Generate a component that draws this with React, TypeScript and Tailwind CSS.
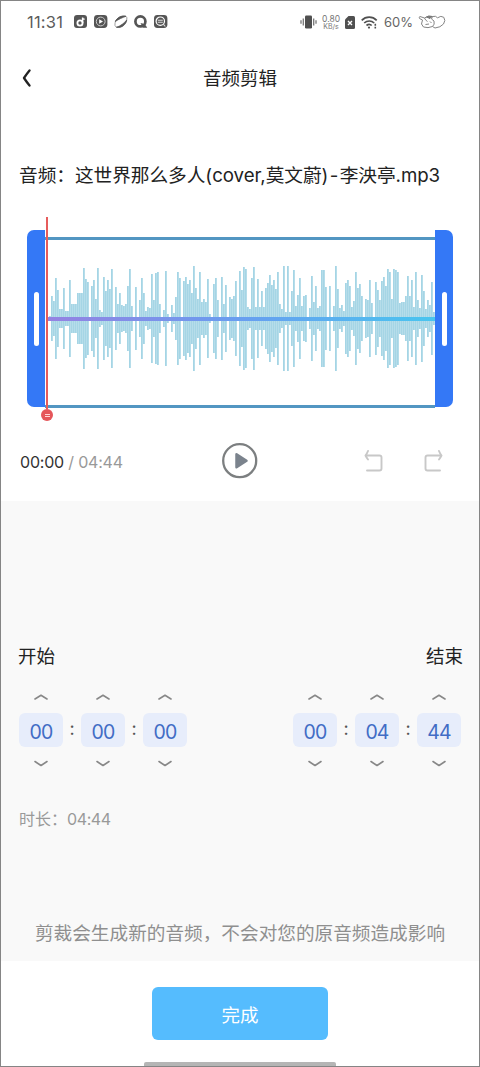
import { useState } from "react";

const AMPLITUDES = [
    2, 22, 17, 40, 28, 9, 9, 30, 7, 7, 38, 14, 14, 14, 25, 25, 25, 50, 39, 36, 0, 32, 38, 19, 50, 8, 6, 41, 27, 38,
    29, 49, 0, 31, 14, 25, 13, 12, 14, 32, 49, 12, 0, 31, 0, 18, 40, 25, 7, 11, 10, 44, 18, 45, 46, 14, 0, 8,
    47, 4, 0, 13, 5, 21, 46, 40, 0, 37, 41, 34, 38, 25, 52, 30, 19, 46, 16, 19, 16, 39, 4, 0, 34, 40, 18, 0, 41,
    14, 33, 0, 21, 19, 22, 37, 0, 47, 28, 51, 49, 11, 9, 40, 51, 11, 39, 11, 27, 11, 30, 35, 43, 33, 38, 29, 46,
    14, 9, 52, 6, 52, 6, 27, 48, 12, 23, 40, 12, 22, 23, 0, 10, 42, 16,
    32, 10, 12, 48, 48, 31, 0, 32, 0, 12, 52, 29, 10, 13, 7, 35, 38, 32, 11, 17, 46, 30, 34, 22, 0, 19, 18, 38,
    15, 0, 36, 28, 18, 37, 41, 32, 49, 46, 19, 49, 48, 46, 15, 16, 16, 22, 42, 22, 38, 11, 46, 18, 10, 43, 27, 9,
    18, 13, 36, 6,
];

const pad = (v: number) => String(v).padStart(2, "0");

function StatusBar() {
    return (
        <div className="h-[42px] pl-[26px] pr-[33px] flex items-center justify-between text-[#5c5c5c]">
            <div className="flex items-center">
                <span className="w-[47px] text-[16.5px] leading-5 tracking-[0.2px]">11:31</span>
                <svg width="94" height="14" viewBox="0 0 94 14" fill="none">
                    <rect width="13" height="13" rx="3" fill="#555" />
                    <circle cx="6" cy="8" r="2.6" stroke="#fff" strokeWidth="1.8" />
                    <path d="M8.6 8V2.5M8.6 3.6l2 .8" stroke="#fff" strokeWidth="1.5" />
                    <rect x="20" width="13.4" height="13" rx="3.4" fill="#555" />
                    <circle cx="26.7" cy="6.5" r="4.4" stroke="#ccc" strokeWidth="1" />
                    <path d="M25.2 4.2v4.6l3.8-2.3z" fill="#fff" />
                    <path d="M41 10.5C40.500 6 43.500 2.200 48 1.200 50.500.7 52.500 1 52.800 2.500 53.300 6.500 50.500 10.500 46.500 12 44 12.700 41.500 12.500 41 10.500z" stroke="#888" strokeWidth=".8" />
                    <path d="M41.300 6.500C43 2.500 47.500.4 52 1.300 48.500 2.500 44.500 4.300 41.300 6.500zM42.500 12.300C46.500 11 50.500 8 52.700 5 52 9.800 47.500 13.200 42.500 12.300z" fill="#555" stroke="#555" strokeWidth=".8" />
                    <circle cx="66.4" cy="6.4" r="5" stroke="#555" strokeWidth="2.7" />
                    <path d="M66.500 8.200c2.500-.3 4 .7 5.500 2.500l1.200 2.100h-4z" fill="#555" />
                    <rect x="80" width="13.4" height="13" rx="3.4" fill="#555" />
                    <circle cx="86.3" cy="6.2" r="4.2" stroke="#fff" strokeWidth="1.2" />
                    <path d="M83.800 5.200h5M83.800 7.200h5M89.300 9.200l2 2.300" stroke="#ddd" strokeWidth="1.1" />
                </svg>
            </div>
            <div className="flex items-center">
                <svg width="17" height="14" viewBox="0 0 17 14" fill="none" stroke="#777" strokeWidth="1.3">
                    <rect x="5" y=".5" width="7" height="13" rx="1.3" fill="#505050" stroke="none" />
                    <path d="M3.300 3.500v7M1 5.300v3.400M13.700 3.500v7M16 5.300v3.400" />
                </svg>
                <div className="w-[28px] flex flex-col items-center text-[7px] leading-[7px] text-[#777]">
                    <span className="text-[8.5px] leading-[8px]">0.80</span>
                    <span>KB/s</span>
                </div>
                <svg width="10" height="13" viewBox="0 0 10 13">
                    <path d="M3.500 0H8.500Q10 0 10 1.500V11.500Q10 13 8.500 13H1.500Q0 13 0 11.500V3.500z" fill="#505050" />
                    <path d="M3 5l4 4M7 5L3 9" stroke="#fff" strokeWidth="1.4" />
                </svg>
                <svg className="ml-[6px]" width="17" height="13" viewBox="0 0 17 13" fill="none" stroke="#505050" strokeWidth="1.7">
                    <path d="M.7 4.300c4.200-4.200 10.800-4.200 15 0M3.200 7c2.900-2.700 7.200-2.700 10 0M5.500 9.500c1.700-1.500 3.700-1.500 5.200 0" />
                    <circle cx="8" cy="11.6" r="1.1" fill="#505050" stroke="none" />
                    <path d="M14.300 7.800v2M14.300 10.800v1.600" strokeWidth="1.6" />
                </svg>
                <span className="ml-[6px] w-[34px] text-[13px] leading-5 text-[#666]">60%</span>
                <svg width="28" height="14" viewBox="0 0 28 14" fill="none" stroke="#858585" strokeWidth="1" strokeLinejoin="round">
                    {/* puppy hugging the battery heart */}
                    <path d="M4.500 5L1.500 3.500Q.5 2 2 1.500L6.500 3Q10 0 14.500 1.500L13.500 4L16 6Q17 9.500 14.500 11.500Q10 13.500 5.500 12Q2 9.500 4.500 5z" />
                    <path d="M14.500 1.500Q18 .5 19.500 2.800Q23 .2 25.800 2.300Q28 5.500 25.500 9Q22.500 12.500 17 13L14.500 11.500" />
                    <path d="M6.500 3Q7.500 5.500 9.500 6.500M7.500 9.500L11 9M12 6.500L13.500 8" />
                    <path d="M8.500 2L11 1.200L14 1.500L12 3.500z" fill="#777" stroke="#777" />
                </svg>
            </div>
        </div>
    );
}

function Handle({ side }: { side: "left" | "right" }) {
    return (
        <div className={`w-[18px] h-[177px] shrink-0 flex items-center justify-center bg-[#3478f6] ${side === "left" ? "rounded-l-[7px]" : "rounded-r-[7px]"}`}>
            <div className="w-[5px] h-[54px] rounded-full bg-white" />
        </div>
    );
}

function Waveform() {
    return (
        <div className="relative mt-[27px] ml-[26px] w-[426px] h-[204px] pt-[13px] flex items-start">
            <Handle side="left" />
            <div className="mt-[7px] w-[390px] h-[171px] border-y-[3px] border-[#5296c2] bg-white">
                <svg width="390" height="165" viewBox="0 0 390 165">
                    <defs>
                        <linearGradient id="axis" x1="0" x2="1">
                            <stop offset="0" stopColor="#9582e2" />
                            <stop offset=".5" stopColor="#689ef0" />
                            <stop offset="1" stopColor="#49c5ef" />
                        </linearGradient>
                    </defs>
                    <g fill="#a5d5e5">
                        {AMPLITUDES.map((a, i) => a > 0 && (
                            <rect key={i} x={4 + i * 2} y={78 - a} width="1.8" height={a * 2 + 1} />
                        ))}
                    </g>
                    <rect x="1" y="77" width="389" height="4" fill="url(#axis)" />
                </svg>
            </div>
            <Handle side="right" />
            {/* playhead */}
            <div className="absolute left-[14px] top-0 w-[12px] flex flex-col items-center">
                <div className="w-[2px] h-[192px] bg-[#e65c5c]" />
                <div className="w-[12px] h-[12px] rounded-full bg-[#e5565a] flex flex-col items-center justify-center gap-[1px]">
                    <div className="w-[5px] h-px bg-[#ffd5d5]" />
                    <div className="w-[5px] h-px bg-[#ffd5d5]" />
                </div>
            </div>
        </div>
    );
}

function Arrow({ up, onClick }: { up?: boolean; onClick: () => void }) {
    return (
        <button onClick={onClick} className="h-4 w-full flex items-center justify-center">
            <svg width="14" height="7" viewBox="0 0 14 7" fill="none" stroke="#888" strokeWidth="1.6" strokeLinecap="round" strokeLinejoin="round">
                <path d={up ? "M1 5L7 1.300L13 5" : "M1 1.500L7 5.500L13 1.500"} />
            </svg>
        </button>
    );
}

function TimePicker({ value, onChange }: { value: number[]; onChange: (v: number[]) => void }) {
    const step = (idx: number, d: number) => onChange(value.map((v, i) => (i === idx ? (v + d + 60) % 60 : v)));
    return (
        <div className="flex items-center">
            {value.map((v, i) => (
                <div key={i} className="flex items-center">
                    {i > 0 && <span className="w-[18px] pb-[2px] text-center text-[18px] leading-5 text-[#555]">:</span>}
                    <div className="w-[44px] flex flex-col items-center">
                        <Arrow up onClick={() => step(i, 1)} />
                        <div className="my-2 w-[44px] h-[34px] pt-[3px] rounded-[6px] bg-[#e7edfb] flex items-center justify-center text-[19.5px] leading-6 tracking-[-0.9px] text-[#416cc5]">{pad(v)}</div>
                        <Arrow onClick={() => step(i, -1)} />
                    </div>
                </div>
            ))}
        </div>
    );
}

export default function App() {
    const [start, setStart] = useState([0, 0, 0]);
    const [end, setEnd] = useState([0, 4, 44]);

    return (
        <div className="w-[480px] h-[1067px] overflow-hidden border border-[#858585] bg-white flex flex-col font-['Inter','Noto_Sans_CJK_SC',sans-serif] text-[#222]">
            <StatusBar />

            <div className="h-[70px] px-[20px] grid grid-cols-[60px_1fr_60px] items-center">
                <button>
                    <svg width="10" height="18" viewBox="0 0 10 18" fill="none" stroke="#222" strokeWidth="2.3" strokeLinecap="round" strokeLinejoin="round">
                        <path d="M8.500 1.500Q6 4.500 3 9Q6 13.500 8.500 16.500" />
                    </svg>
                </button>
                <h1 className="text-center text-[18.5px] leading-7">音频剪辑</h1>
            </div>

            <p className="mt-[49px] ml-[18px] text-[18.7px] leading-7 tracking-[-0.05px] whitespace-nowrap">
                音频：这世界那么多人(cover,莫文蔚)<span className="px-[1.4px]">-</span>李泱亭.mp3
            </p>

            <Waveform />

            <div className="h-[80px] pb-px px-[19px] grid grid-cols-[1fr_36px_1fr] items-center">
                <div className="pt-[2px] text-[16px] leading-5 tracking-[-0.2px] text-[#999]">
                    <span className="text-[#333]">00:00</span> / 04:44
                </div>
                <button>
                    <svg width="36" height="36" viewBox="0 0 36 36" fill="none">
                        <circle cx="17.7" cy="17.7" r="16.5" stroke="#7c7f80" strokeWidth="2.3" />
                        <path d="M14.500 11.200L24.500 17.700L14.500 24.200z" fill="#7b838d" stroke="#7b838d" strokeWidth="2.5" strokeLinejoin="round" />
                    </svg>
                </button>
                <div className="pr-[17px] flex justify-end gap-[41px]">
                    <svg width="19" height="22" viewBox="0 0 19 22" fill="none" stroke="#c8c8c8" strokeWidth="1.9" strokeLinecap="round" strokeLinejoin="round">
                        <path d="M4 1Q3 3.500 1.500 5.500Q2.500 7.500 4 9.500M2 5.500H15.500Q17.500 5.500 17.500 7.500V18.500Q17.500 20.500 15.500 20.500H3" />
                    </svg>
                    <svg width="19" height="22" viewBox="0 0 19 22" fill="none" stroke="#c8c8c8" strokeWidth="1.9" strokeLinecap="round" strokeLinejoin="round">
                        <path d="M15 1Q16 3.500 17.500 5.500Q16.500 7.500 15 9.500M17 5.500H3.500Q1.500 5.500 1.500 7.500V18.500Q1.500 20.500 3.500 20.500H16" />
                    </svg>
                </div>
            </div>

            <div className="h-[460px] shrink-0 pt-[141px] px-[17px] bg-[#f9f9f9] flex flex-col">
                <div className="-mr-px flex justify-between text-[18.5px] leading-7">
                    <span>开始</span>
                    <span>结束</span>
                </div>
                <div className="mt-[19px] px-px flex justify-between">
                    <TimePicker value={start} onChange={setStart} />
                    <TimePicker value={end} onChange={setEnd} />
                </div>
                <p className="mt-[36px] ml-px text-[16px] leading-6 text-[#999]">时长：<span className="tracking-[-0.4px]">04:44</span></p>
                <p className="mt-[88px] text-center text-[18.65px] leading-7 text-[#8f8f8f] whitespace-nowrap">剪裁会生成新的音频，不会对您的原音频造成影响</p>
            </div>

            <div className="flex-1 pt-[26px] flex flex-col items-center justify-between">
                <button className="w-[176px] h-[53px] pt-[2px] rounded-[6px] bg-[#55bcfe] text-white text-[18.5px] leading-7">完成</button>
                <div className="w-[192px] h-[4px] rounded-t-[2px] bg-[#b5b5b5]" />
            </div>
        </div>
    );
}
